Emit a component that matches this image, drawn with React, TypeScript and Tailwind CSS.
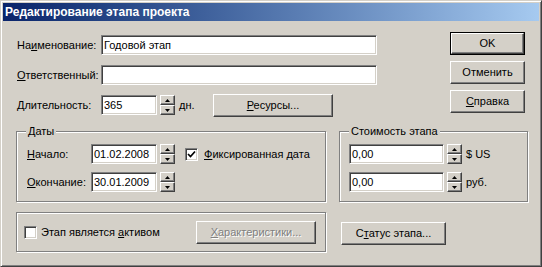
import React from "react";

const sunken =
  "bg-white border border-t-[#808080] border-l-[#808080] border-r-white border-b-white shadow-[inset_1px_1px_0_#404040,inset_-1px_-1px_0_#d4d0c8]";
const raised =
  "bg-[#d4d0c8] border border-t-white border-l-white border-r-[#404040] border-b-[#404040] shadow-[inset_-1px_-1px_0_#808080]";
const etched =
  "border border-[#808080] shadow-[inset_1px_1px_0_#fff,1px_1px_0_#fff]";

function Field({ w, value }: { w: string; value?: string }) {
  return (
    <div className={`${sunken} ${w} h-[20px] flex items-center pl-[2px] text-black`}>
      {value}
    </div>
  );
}

function Arrow({ up }: { up?: boolean }) {
  return (
    <svg width="5" height="3" viewBox="0 0 5 3">
      <polygon points={up ? "0,3 2.5,0 5,3" : "0,0 2.5,3 5,0"} fill="#000" />
    </svg>
  );
}

function Spin() {
  return (
    <div className="flex flex-col w-[15px] h-[20px] ml-[3px]">
      <div className={`${raised} flex-1 flex items-center justify-center`}>
        <Arrow up />
      </div>
      <div className={`${raised} flex-1 flex items-center justify-center`}>
        <Arrow />
      </div>
    </div>
  );
}

function Check({ checked }: { checked?: boolean }) {
  return (
    <div className={`${sunken} w-[13px] h-[13px] flex items-center justify-center shrink-0`}>
      {checked && (
        <svg width="9" height="9" viewBox="0 0 9 9">
          <path d="M1 4 L3.5 6.5 L8 1.5" stroke="#000" strokeWidth="1.7" fill="none" />
        </svg>
      )}
    </div>
  );
}

function Btn({ w, children, disabled }: { w: string; children: React.ReactNode; disabled?: boolean }) {
  return (
    <div
      className={`${raised} ${w} h-[23px] flex items-center justify-center ${
        disabled ? "text-[#808080] [text-shadow:1px_1px_0_#fff]" : "text-black"
      }`}
    >
      {children}
    </div>
  );
}

function Group({ title, w, h, className, children }: { title: string; w: string; h: string; className?: string; children: React.ReactNode }) {
  return (
    <div className={`relative ${etched} ${w} ${h} ${className ?? ""}`}>
      <span className="absolute left-[9px] top-[-7px] px-[2px] bg-[#d4d0c8] leading-[13px]">{title}</span>
      {children}
    </div>
  );
}

export default function App() {
  return (
    <div className="w-[542px] h-[267px] bg-[#d4d0c8] border border-t-[#d4d0c8] border-l-[#d4d0c8] border-r-[#404040] border-b-[#404040] shadow-[inset_1px_1px_0_#fff,inset_-1px_-1px_0_#808080] p-[2px] font-['Liberation_Sans',Arial,sans-serif] text-[11px] leading-[13px] text-black overflow-hidden">
      <div className="h-[18px] bg-linear-to-r from-[#0a246a] to-[#a6caf0] flex items-center pl-[2px] text-white font-bold text-[12px]">
        Редактирование этапа проекта
      </div>

      {/* top section */}
      <div className="flex mt-[11px]">
        <div className="flex flex-col gap-[10px] ml-[14px] mt-[3px]">
          <div className="flex items-center h-[20px]">
            <span className="w-[84px]">
              На<u>и</u>менование:
            </span>
            <Field w="w-[276px]" value="Годовой этап" />
          </div>
          <div className="flex items-center h-[20px]">
            <span className="w-[84px]">
              <u>О</u>тветственный:
            </span>
            <Field w="w-[276px]" />
          </div>
          <div className="flex items-center h-[20px]">
            <span className="w-[84px]">
              <u>Д</u>лительность:
            </span>
            <Field w="w-[56px]" value="365" />
            <Spin />
            <span className="w-[38px] pl-[4px]">дн.</span>
            <Btn w="w-[120px]">
              <span>
                <u>Р</u>есурсы...
              </span>
            </Btn>
          </div>
        </div>
        <div className="flex flex-col gap-[6px] ml-[73px]">
          <div className="border border-black w-[75px] h-[23px]">
            <div className={`${raised} w-full h-full flex items-center justify-center`}>OK</div>
          </div>
          <Btn w="w-[75px]">Отменить</Btn>
          <Btn w="w-[75px]">
            <span>
              <u>С</u>правка
            </span>
          </Btn>
        </div>
      </div>

      {/* groups */}
      <div className="flex mt-[16px] ml-[13px]">
        <Group title="Даты" w="w-[310px]" h="h-[71px]">
          <div className="flex flex-col gap-[8px] pt-[12px] pl-[10px]">
            <div className="flex items-center h-[20px]">
              <span className="w-[64px]">
                <u>Н</u>ачало:
              </span>
              <Field w="w-[66px]" value="01.02.2008" />
              <Spin />
              <div className="ml-[10px]">
                <Check checked />
              </div>
              <span className="ml-[6px]">
                <u>Ф</u>иксированная дата
              </span>
            </div>
            <div className="flex items-center h-[20px]">
              <span className="w-[64px]">
                <u>О</u>кончание:
              </span>
              <Field w="w-[66px]" value="30.01.2009" />
              <Spin />
            </div>
          </div>
        </Group>
        <Group title="Стоимость этапа" w="w-[189px]" h="h-[71px]" className="ml-[13px]">
          <div className="flex flex-col gap-[8px] pt-[12px] pl-[9px]">
            <div className="flex items-center h-[20px]">
              <Field w="w-[95px]" value="0,00" />
              <Spin />
              <span className="ml-[4px]">$ US</span>
            </div>
            <div className="flex items-center h-[20px]">
              <Field w="w-[95px]" value="0,00" />
              <Spin />
              <span className="ml-[4px]">руб.</span>
            </div>
          </div>
        </Group>
      </div>

      {/* bottom */}
      <div className="flex items-center mt-[10px] ml-[13px]">
        <div className={`${etched} w-[310px] h-[40px] flex items-center pl-[7px] pr-[9px]`}>
          <Check />
          <span className="ml-[4px]">
            Этап является <u>а</u>ктивом
          </span>
          <div className="ml-auto">
            <Btn w="w-[120px]" disabled>
              <span>
                <u>Х</u>арактеристики...
              </span>
            </Btn>
          </div>
        </div>
        <div className="ml-[15px] mt-[3px]">
          <Btn w="w-[105px]">
            <span>
              С<u>т</u>атус этапа...
            </span>
          </Btn>
        </div>
      </div>
    </div>
  );
}
